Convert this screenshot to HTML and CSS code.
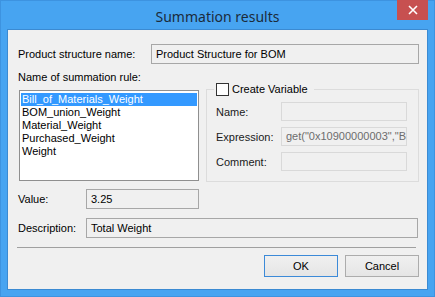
FILE: index.html
```html
<!DOCTYPE html>
<html lang="en">
<head>
    <meta charset="UTF-8">
    <title>Summation results</title>
    <link rel="stylesheet" href="styles.css">
</head>
<body>
    <div class="window">
        <div class="titlebar">
            <span class="title">Summation results</span>
            <div class="close">
                <svg width="10" height="10" viewBox="0 0 10 10">
                    <path d="M1 1 L9 9 M9 1 L1 9" stroke="#fff" stroke-width="1.6" fill="none"/>
                </svg>
            </div>
        </div>
        <div class="client">
            <div class="row product-row">
                <span class="label product-label">Product structure name:</span>
                <div class="field product-field">Product Structure for BOM</div>
            </div>

            <div class="middle">
                <div class="rules">
                    <div class="label rules-label">Name of summation rule:</div>
                    <ul class="listbox">
                        <li class="selected">Bill_of_Materials_Weight</li>
                        <li>BOM_union_Weight</li>
                        <li>Material_Weight</li>
                        <li>Purchased_Weight</li>
                        <li>Weight</li>
                    </ul>
                </div>
                <fieldset class="group">
                    <legend><input type="checkbox" class="check"><span>Create Variable</span></legend>
                    <div class="group-row">
                        <span class="group-label">Name:</span>
                        <div class="field disabled"></div>
                    </div>
                    <div class="group-row">
                        <span class="group-label">Expression:</span>
                        <div class="field disabled">get("0x10900000003","Bill_of_Materials_Weight")</div>
                    </div>
                    <div class="group-row">
                        <span class="group-label">Comment:</span>
                        <div class="field disabled"></div>
                    </div>
                </fieldset>
            </div>

            <div class="row value-row">
                <span class="label short-label">Value:</span>
                <div class="field value-field">3.25</div>
            </div>
            <div class="row desc-row">
                <span class="label short-label">Description:</span>
                <div class="field desc-field">Total Weight</div>
            </div>

            <div class="separator"></div>

            <div class="buttons">
                <button class="btn default">OK</button>
                <button class="btn">Cancel</button>
            </div>
        </div>
    </div>
</body>
</html>
```

FILE: styles.css
```css
body, html {
    margin: 0;
    padding: 0;
    font-family: "Liberation Sans", Arial, sans-serif;
    font-size: 11px;
    color: #000;
}

.window {
    position: relative;
    width: 435px;
    height: 297px;
    box-sizing: border-box;
    background: #47a4f1;
    border: 1px solid #3d93e0;
    padding: 0 6px 6px 6px;
    display: flex;
    flex-direction: column;
}

.titlebar {
    position: relative;
    height: 28px;
    display: flex;
    align-items: center;
    justify-content: center;
}

.title {
    font-family: "Noto Sans", "Open Sans", sans-serif;
    font-size: 14px;
    color: #1b2b3b;
    margin-top: 2px;
}

.close {
    position: absolute;
    top: -1px;
    right: 0;
    width: 31px;
    height: 20px;
    background: #c75050;
    display: flex;
    align-items: center;
    justify-content: center;
}

.client {
    height: 261px;
    box-sizing: border-box;
    background: #f0f0f0;
    border: 1px solid #3b8ad2;
    padding: 14px 8px 0 10px;
}

.row {
    display: flex;
    align-items: center;
}

.label {
    white-space: nowrap;
}

.product-label {
    width: 133px;
}

.field {
    box-sizing: border-box;
    height: 20px;
    line-height: 18px;
    border: 1px solid #a7a7a7;
    background: #f0f0f0;
    padding: 0 4px;
    white-space: nowrap;
    overflow: hidden;
}

.product-field {
    width: 268px;
}

.middle {
    display: flex;
    align-items: flex-start;
    margin-top: 7px;
}

.rules {
    width: 181px;
}

.rules-label {
    line-height: 13px;
}

.listbox {
    list-style: none;
    margin: 6px 0 0 1px;
    padding: 2px 1px 0 1px;
    box-sizing: border-box;
    width: 180px;
    height: 91px;
    background: #fff;
    border: 1px solid #8f8f8f;
}

.listbox li {
    line-height: 13px;
    padding-left: 1px;
    white-space: nowrap;
}

.listbox li.selected {
    background: #3399ff;
    color: #fff;
}

.group {
    margin: 12px 0 0 7px;
    padding: 6px 0 10px 9px;
    width: 213px;
    box-sizing: border-box;
    border: 1px solid #dcdcdc;
    display: flex;
    flex-direction: column;
    gap: 6px;
}

.group legend {
    display: flex;
    align-items: center;
    gap: 3px;
    margin-left: -2px;
    padding: 0 6px 0 2px;
    line-height: 13px;
}

.check {
    appearance: none;
    -webkit-appearance: none;
    width: 13px;
    height: 13px;
    margin: 0;
    box-sizing: border-box;
    border: 1px solid #333;
    background: #fff;
}

.group-row {
    display: flex;
    align-items: center;
}

.group-label {
    width: 65px;
    color: #1a1a1a;
}

.group .field {
    width: 126px;
    height: 19px;
    line-height: 17px;
}

.field.disabled {
    border-color: #d9d9d9;
    color: #6d6d6d;
}

.value-row {
    margin-top: 7px;
}

.desc-row {
    margin-top: 9px;
}

.short-label {
    width: 68px;
}

.value-field {
    width: 113px;
}

.desc-field {
    width: 332px;
}

.separator {
    margin: 9px 0 0 -1px;
    width: 399px;
    border-top: 1px solid #a0a0a0;
}

.buttons {
    display: flex;
    justify-content: flex-end;
    gap: 7px;
    margin-top: 7px;
}

.btn {
    width: 74px;
    height: 22px;
    box-sizing: border-box;
    border: 1px solid #acacac;
    background: linear-gradient(#f0f0f0, #e5e5e5);
    font-family: "Liberation Sans", Arial, sans-serif;
    font-size: 11px;
    color: #000;
    padding: 0;
}

.btn.default {
    border-color: #3c8ad8;
}
```
